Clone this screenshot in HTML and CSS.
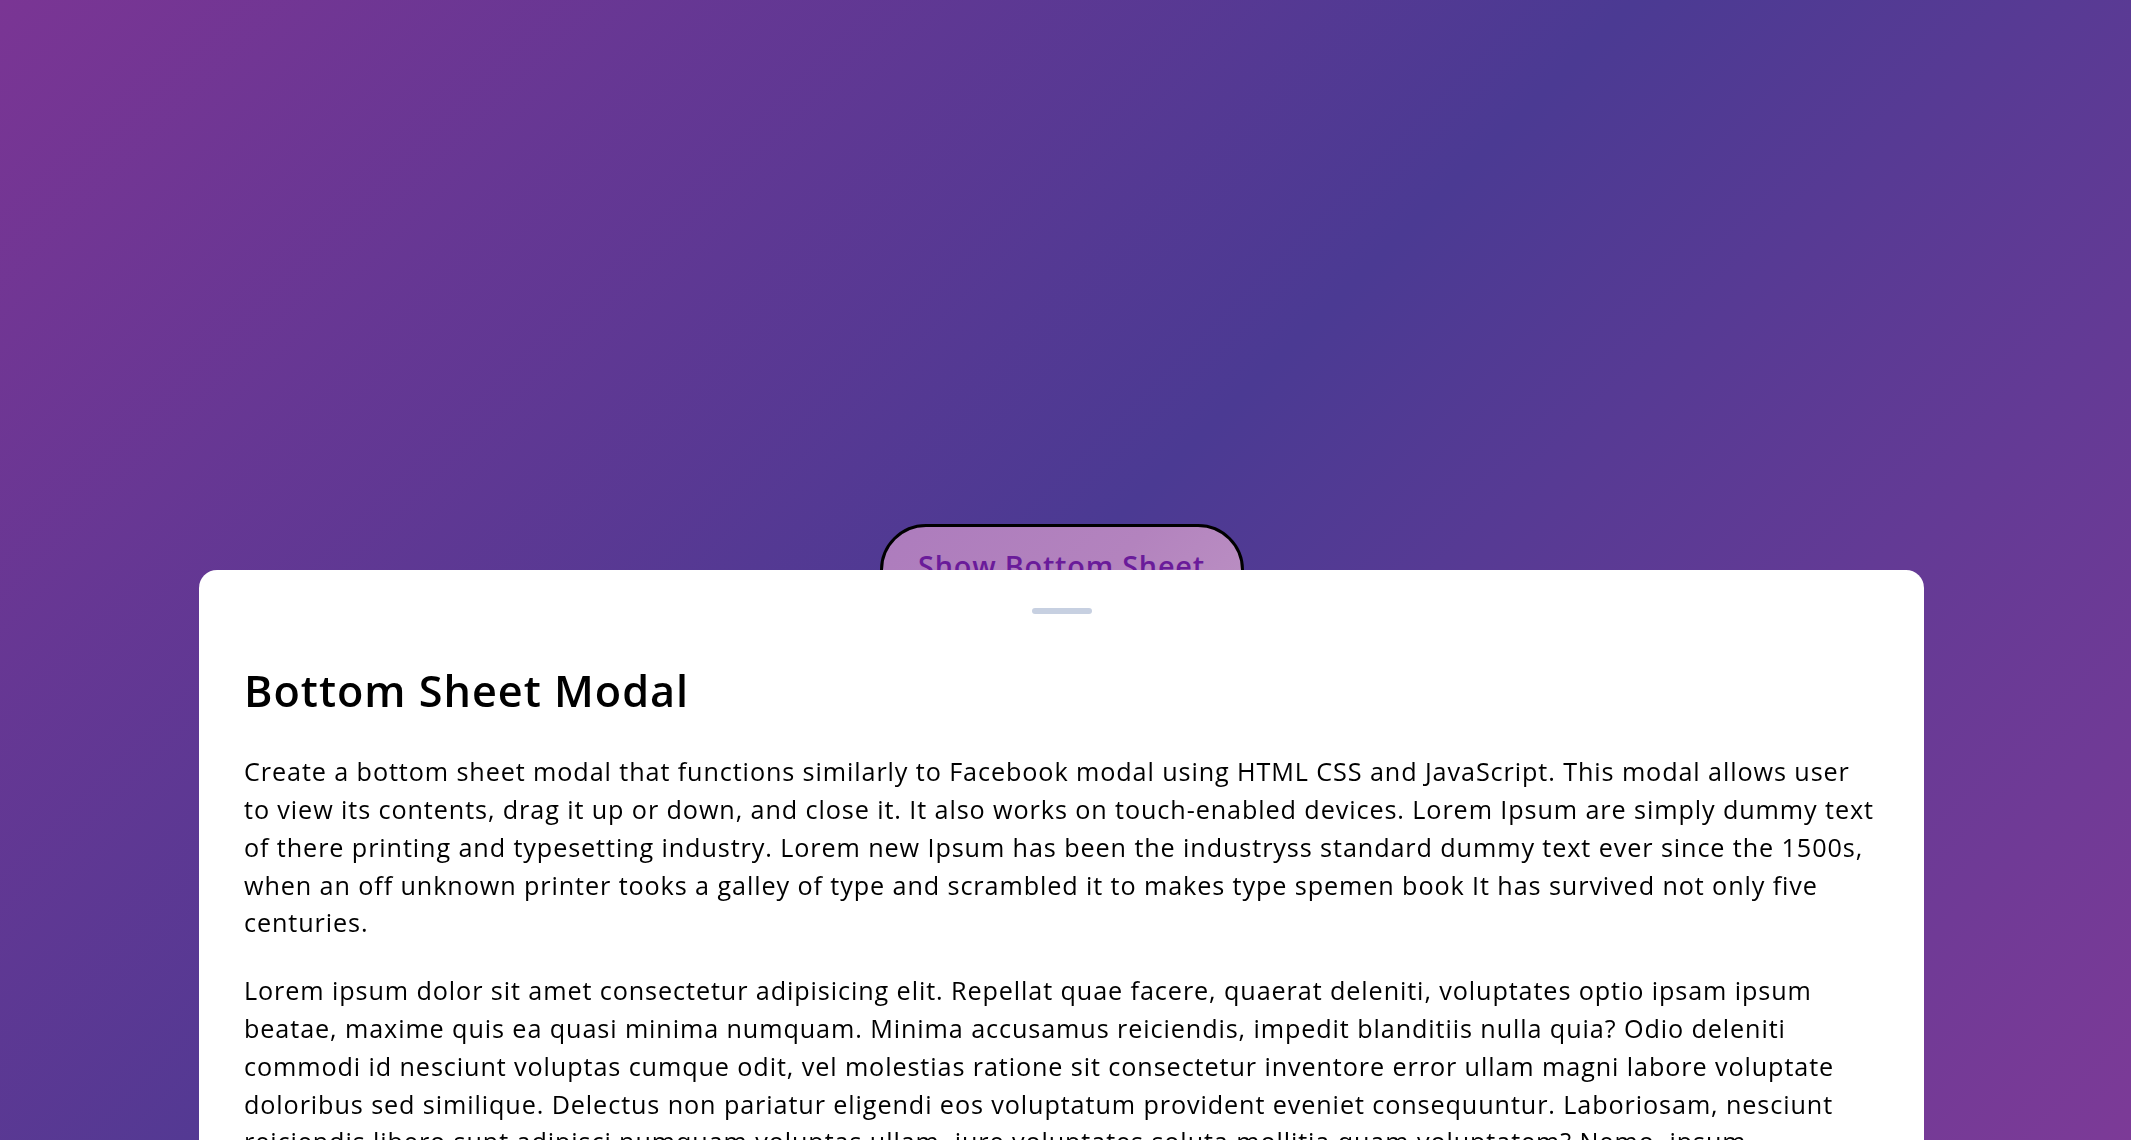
FILE: index.html
```html
<!DOCTYPE html>
<html lang="en">
<head>
<meta charset="utf-8">
<title>Bottom Sheet Modal</title>
<link rel="stylesheet" href="styles.css">
</head>
<body>
  <button class="show-modal">Show Bottom Sheet</button>
  <div class="bottom-sheet">
    <div class="content">
      <div class="header">
        <div class="drag-icon"><span></span></div>
      </div>
      <div class="body">
        <h2>Bottom Sheet Modal</h2>
        <p>Create a bottom sheet modal that functions similarly to Facebook modal using HTML CSS and JavaScript. This modal allows user to view its contents, drag it up or down, and close it. It also works on touch-enabled devices. Lorem Ipsum are simply dummy text of there printing and typesetting industry. Lorem new Ipsum has been the industryss standard dummy text ever since the 1500s, when an off unknown printer tooks a galley of type and scrambled it to makes type spemen book It has survived not only five centuries.</p>
        <p>Lorem ipsum dolor sit amet consectetur adipisicing elit. Repellat quae facere, quaerat deleniti, voluptates optio ipsam ipsum beatae, maxime quis ea quasi minima numquam. Minima accusamus reiciendis, impedit blanditiis nulla quia? Odio deleniti commodi id nesciunt voluptas cumque odit, vel molestias ratione sit consectetur inventore error ullam magni labore voluptate doloribus sed similique. Delectus non pariatur eligendi eos voluptatum provident eveniet consequuntur. Laboriosam, nesciunt reiciendis libero sunt adipisci numquam voluptas ullam, iure voluptates soluta mollitia quam voluptatem? Nemo, ipsum.</p>
      </div>
    </div>
  </div>
</body>
</html>
```
FILE: styles.css
```css
* {
  margin: 0;
  padding: 0;
  box-sizing: border-box;
}

html, body {
  height: 100%;
}

body {
  font-family: "Open Sans", "Noto Sans", sans-serif;
  display: flex;
  align-items: center;
  justify-content: center;
  min-height: 100vh;
  padding-right: 8px;
  overflow: hidden;
  background: linear-gradient(135deg, #7a3594 0%, #4b3a93 50%, #7c3a97 100%);
}

.show-modal {
  font-family: "Open Sans", "Noto Sans", sans-serif;
  font-weight: 600;
  font-size: 28.8px;
  letter-spacing: 0.8px;
  color: #6a1b9a;
  width: 364px;
  height: 92px;
  padding-bottom: 10px;
  border: 3px solid #000;
  border-radius: 46px;
  background: linear-gradient(135deg, #ad7cbd 0%, #b383be 60%, #bb90c3 100%);
  cursor: pointer;
}

.bottom-sheet {
  position: fixed;
  inset: 0 8px 0 0;
  display: flex;
  align-items: flex-end;
  justify-content: center;
}

.content {
  width: 100%;
  max-width: 1725px;
  height: 570px;
  background: #fff;
  border-radius: 18px 18px 0 0;
  padding: 37.5px 45px;
  color: #000;
}

.header {
  display: flex;
  justify-content: center;
}

.drag-icon {
  padding: 22.5px;
  margin-top: -22.5px;
}

.drag-icon span {
  display: block;
  width: 60px;
  height: 6px;
  border-radius: 75px;
  background: #c7d0e1;
}

.body {
  padding: 22.5px 0 60px;
}

.body h2 {
  font-size: 43.2px;
  font-weight: 600;
  letter-spacing: 1px;
  line-height: 64.8px;
}

.body p {
  margin-top: 30px;
  font-size: 25.2px;
  letter-spacing: 0.9px;
  line-height: 37.8px;
}
```
